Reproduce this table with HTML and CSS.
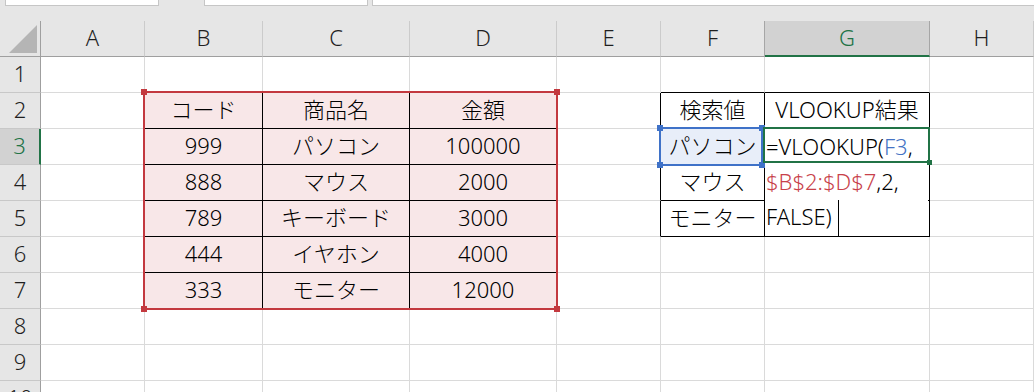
FILE: index.html
```html
<!DOCTYPE html>
<html lang="ja">
<head>
    <meta charset="UTF-8">
    <title>VLOOKUP</title>
    <link rel="stylesheet" href="styles.css">
</head>
<body>
    <!-- 名前ボックス / 数式バーの下端 -->
    <div class="toolbar">
        <div class="box box-name"></div>
        <div class="box box-fx"></div>
        <div class="box box-formula"></div>
    </div>

    <div class="book">
        <div class="sheet">
            <div class="corner"></div>
            <div class="ch">A</div>
            <div class="ch">B</div>
            <div class="ch">C</div>
            <div class="ch">D</div>
            <div class="ch">E</div>
            <div class="ch edge">F</div>
            <div class="ch sel edge">G</div>
            <div class="ch">H</div>

            <!-- 1 -->
            <div class="rh">1</div>
            <div></div>
            <div class="bt"></div>
            <div class="bt"></div>
            <div class="bt"></div>
            <div></div>
            <div class="bt"></div>
            <div class="bt"></div>
            <div></div>

            <!-- 2 -->
            <div class="rh">2</div>
            <div class="bl"></div>
            <div class="t pk">コード</div>
            <div class="t pk">商品名</div>
            <div class="t pk">金額</div>
            <div class="bl"></div>
            <div class="t">検索値</div>
            <div class="t">VLOOKUP結果</div>
            <div></div>

            <!-- 3 -->
            <div class="rh sel">3</div>
            <div class="bl"></div>
            <div class="t pk">999</div>
            <div class="t pk">パソコン</div>
            <div class="t pk">100000</div>
            <div class="bl"></div>
            <div class="t hl">パソコン</div>
            <div class="t"></div>
            <div></div>

            <!-- 4 -->
            <div class="rh">4</div>
            <div class="bl"></div>
            <div class="t pk">888</div>
            <div class="t pk">マウス</div>
            <div class="t pk">2000</div>
            <div class="bl"></div>
            <div class="t">マウス</div>
            <div class="t"></div>
            <div></div>

            <!-- 5 -->
            <div class="rh">5</div>
            <div class="bl"></div>
            <div class="t pk">789</div>
            <div class="t pk">キーボード</div>
            <div class="t pk">3000</div>
            <div class="bl"></div>
            <div class="t">モニター</div>
            <div class="t"></div>
            <div></div>

            <!-- 6 -->
            <div class="rh">6</div>
            <div class="bl"></div>
            <div class="t pk">444</div>
            <div class="t pk">イヤホン</div>
            <div class="t pk">4000</div>
            <div></div>
            <div></div>
            <div></div>
            <div></div>

            <!-- 7 -->
            <div class="rh">7</div>
            <div class="bl"></div>
            <div class="t pk">333</div>
            <div class="t pk">モニター</div>
            <div class="t pk">12000</div>
            <div></div>
            <div></div>
            <div></div>
            <div></div>

            <!-- 8 -->
            <div class="rh">8</div>
            <div></div><div></div><div></div><div></div><div></div><div></div><div></div><div></div>

            <!-- 9 -->
            <div class="rh">9</div>
            <div></div><div></div><div></div><div></div><div></div><div></div><div></div><div></div>

            <!-- 10 (下端で切れる行) -->
            <div class="rh">10</div>
            <div></div><div></div><div></div><div></div><div></div><div></div><div></div><div></div>
        </div>

        <!-- 参照範囲の枠・アクティブセル・セル内編集 -->
        <div class="marks">
            <div class="ref ref-red">
                <span class="hd tl"></span><span class="hd tr"></span>
                <span class="hd bl"></span><span class="hd br"></span>
            </div>
            <div class="ref ref-blue">
                <span class="hd tl"></span><span class="hd tr"></span>
                <span class="hd bl"></span><span class="hd br"></span>
            </div>
            <div class="active">
                <span class="hd br"></span>
            </div>
            <div class="editor">
                =VLOOKUP(<span class="fb">F3</span>,<br>
                <span class="fr">$B$2:$D$7</span>,2,<br>
                FALSE)<span class="caret"></span>
            </div>
        </div>
    </div>
</body>
</html>
```

FILE: styles.css
```css
body {
    margin: 0;
    width: 1034px;
    height: 392px;
    overflow: hidden;
    background: #fff;
    font-family: "Noto Sans", "Noto Sans CJK JP", sans-serif;
    font-size: 22px;
    font-weight: 300;
    color: #000;
}

/* 上部のバー */
.toolbar {
    height: 21px;
    background: #e6e6e6;
    display: flex;
    align-items: flex-start;
}
.box {
    height: 6px;
    box-sizing: border-box;
    background: #fff;
    border: 1px solid #c6c6c6;
    border-top: none;
}
.box-name {
    margin-left: 5px;
    width: 154px;
}
.box-fx {
    margin-left: 45px;
    width: 164px;
}
.box-formula {
    margin-left: 4px;
    flex: 1;
    margin-right: -4px;
}

/* シート */
.book {
    display: grid;
}
.sheet, .marks {
    grid-area: 1 / 1;
    display: grid;
    grid-template-columns: 41px 104px 118px 147px 147px 104px 104px 165px 104px;
    grid-template-rows: repeat(11, 36px);
}
.marks {
    pointer-events: none;
}
.sheet > div {
    box-sizing: border-box;
    border-right: 1px solid #dadada;
    border-bottom: 1px solid #dadada;
    line-height: 33px;
    text-align: center;
    white-space: nowrap;
    overflow: hidden;
}

/* 見出し */
.sheet > .ch {
    background: #e6e6e6;
    color: #1f1f1f;
    border-right-color: #cbcbcb;
    border-bottom-color: #9f9f9f;
}
.sheet > .ch.edge {
    border-right-color: #a6a6a6;
}
.sheet > .rh {
    background: #e6e6e6;
    color: #1f1f1f;
    border-right-color: #9f9f9f;
    border-bottom-color: #c8c8c8;
}
.sheet > .sel {
    background: #d2d2d2;
    color: #217346;
}
.sheet > .ch.sel {
    border-bottom: 2px solid #217346;
}
.sheet > .rh.sel {
    border-right: 2px solid #217346;
}
.sheet > .corner {
    background: #e6e6e6;
    border-right-color: #9f9f9f;
    border-bottom-color: #9f9f9f;
    display: flex;
    align-items: flex-end;
    justify-content: flex-end;
    padding: 0 3px 3px 0;
}
.corner::before {
    content: "";
    width: 28px;
    height: 28px;
    background: #b5b5b5;
    clip-path: polygon(100% 0, 100% 100%, 0 100%);
}

/* 罫線と塗り */
.sheet > .t {
    border-right-color: #000;
    border-bottom-color: #000;
}
.sheet > .bl {
    border-right-color: #000;
}
.sheet > .bt {
    border-bottom-color: #000;
}
.sheet > .pk {
    background: #f8e7e8;
}
.sheet > .hl {
    background: #e8eef9;
}

/* 参照範囲 */
.ref {
    position: relative;
}
.ref-red {
    grid-column: 3 / 6;
    grid-row: 3 / 9;
    margin: -2px -1px -1px -2px;
    border: 2px solid #c3393f;
}
.ref-blue {
    grid-column: 7;
    grid-row: 4;
    margin: -2px 2px -1px -2px;
    border: 2px solid #3f72c8;
}
.hd {
    position: absolute;
    width: 6px;
    height: 6px;
}
.ref-red .hd {
    background: #c3393f;
}
.ref-blue .hd {
    background: #3f72c8;
}
.hd.tl { left: -4px; top: -4px; }
.hd.tr { right: -4px; top: -4px; }
.hd.bl { left: -4px; bottom: -4px; }
.hd.br { right: -4px; bottom: -4px; }

/* アクティブセル */
.active {
    grid-column: 8;
    grid-row: 4;
    position: relative;
    margin: -2px 0 2px -2px;
    border: 2px solid #217346;
}
.active .hd {
    width: 5px;
    height: 5px;
    background: #217346;
}

/* セル内編集 */
.editor {
    grid-column: 8;
    grid-row: 4 / 7;
    margin: 0 2px 1px 0;
    background: #fff;
    line-height: 35px;
    padding-left: 1px;
    white-space: nowrap;
    overflow: hidden;
}
.fb {
    color: #4472c4;
}
.fr {
    color: #c8414a;
}
.caret {
    display: inline-block;
    width: 1px;
    height: 36px;
    margin: 1px 0 0 6px;
    vertical-align: top;
    background: #000;
}
```
